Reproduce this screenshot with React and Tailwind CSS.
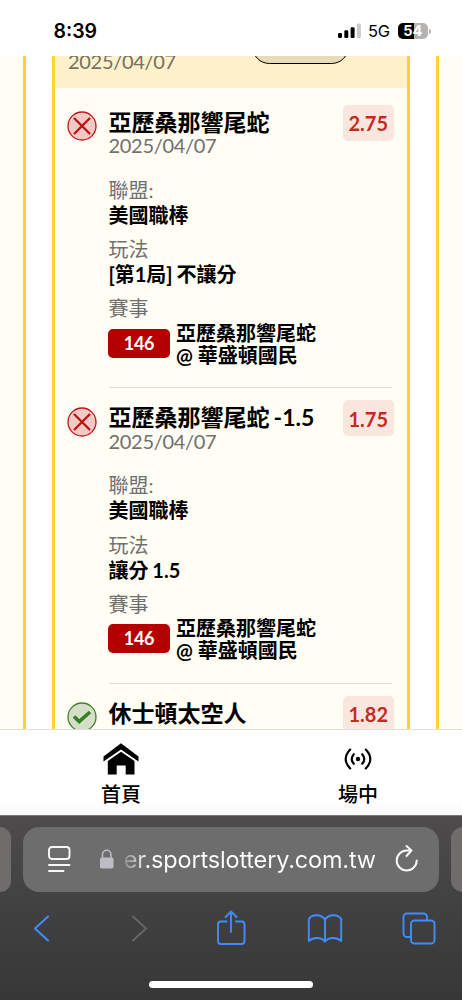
import React from 'react';

const CJK = "font-['Lato','Noto_Sans_CJK_TC',sans-serif]";

function StatusIcon({ won }) {
  return won ? (
    <svg className="block" width="30" height="30" viewBox="0 0 30 30" fill="none">
      <circle cx="15" cy="15" r="14" fill="#d5dfc8" stroke="#43802f" strokeWidth="1.3" />
      <path d="M7 14.500l5.200 5L23 10" stroke="#347f26" strokeWidth="3.600" />
    </svg>
  ) : (
    <svg className="block" width="30" height="30" viewBox="0 0 30 30" fill="none">
      <circle cx="15" cy="15" r="14" fill="#f2c9c4" stroke="#c4151a" strokeWidth="1.3" />
      <path d="M7 7l16 16M23 7L7 23" stroke="#bd0d0d" strokeWidth="2.200" />
    </svg>
  );
}

function Field({ label, value }) {
  return (
    <div className="mb-[9.3px] text-xl leading-[25px]">
      <div className="text-[#707070]">{label}</div>
      <div className="font-bold [word-spacing:-1px]">{value}</div>
    </div>
  );
}

function Bet({ title, odds, play, won }) {
  return (
    <div className="flex h-[295.5px] shrink-0 pl-3">
      <div className="w-[41.5px] shrink-0 pt-[18.5px]">
        <StatusIcon won={won} />
      </div>
      <div className="w-[283px] border-b border-[#dedcd6] pt-[15px]">
        <div className="flex h-[50px] justify-between">
          <div className="whitespace-nowrap">
            <div className="text-[23px] leading-[28px] font-bold [word-spacing:-1.500px]">{title}</div>
            {play && <div className="-mt-[1.5px] text-xl leading-[22px] tracking-[-0.3px] text-[#707070]">2025/04/07</div>}
          </div>
          <div className="-mt-[3px] -mr-[2.500px] flex h-9 w-[51.5px] items-center justify-center rounded-[5px] bg-[#f8e6df] pt-px text-[20px] font-bold text-[#c42b24]">
            {odds}
          </div>
        </div>
        {play && (
          <div className="pt-[20px]">
            <Field label="聯盟:" value="美國職棒" />
            <Field label="玩法" value={play} />
            <div className="text-xl leading-[25px] text-[#707070]">賽事</div>
            <div className="-ml-[0.500px] flex items-start gap-[6px]">
              <div className="mt-[7.500px] flex h-[29px] w-[62px] items-center justify-center rounded-[5px] bg-[#b50000] text-[18px] font-bold tracking-[-0.3px] text-white">
                146
              </div>
              <div className="pt-[0.500px] text-xl leading-[22px] font-bold">
                <div>亞歷桑那響尾蛇</div>
                <div>@ 華盛頓國民</div>
              </div>
            </div>
          </div>
        )}
      </div>
    </div>
  );
}

function StatusBar() {
  return (
    <header className="flex h-14 shrink-0 items-center bg-white pt-[6px] pr-[31.500px] pl-[53.500px] font-['Inter',sans-serif]">
      <span className="mt-[1px] text-[19.500px] font-semibold">8:39</span>
      <svg className="ml-auto" width="24" height="16" viewBox="0 0 24 16">
        <rect x="0" y="10" width="4" height="5" rx="1.2" />
        <rect x="6.3" y="7.2" width="4" height="7.8" rx="1.2" />
        <rect x="12.6" y="4.2" width="4" height="10.8" rx="1.2" />
        <rect x="18.9" y="0.5" width="4" height="14.5" rx="1.2" fill="#cbcbcb" />
      </svg>
      <span className="ml-[6.500px] w-[30px] text-[16.500px] tracking-[-0.200px]">5G</span>
      <div className="flex h-[16.500px] w-[29.5px] items-center justify-center rounded-[5px] bg-linear-to-r from-black from-[54%] to-[#b3b3b3] to-[54%] text-[14.500px] leading-none font-bold text-white">
        54
      </div>
      <div className="ml-px h-[5px] w-[2px] rounded-r-full bg-[#b3b3b3]" />
    </header>
  );
}

function TabBar() {
  return (
    <nav className="flex h-[86px] shrink-0 justify-between border-t border-[#dddddb] bg-linear-to-b from-white from-80% to-[#fafafa] pr-[71px] pl-[68px] text-xl leading-7 font-medium">
      <div className="flex w-[106px] flex-col items-center pt-[13px]">
        <svg width="36" height="33" viewBox="0 0 36 33">
          <path d="M.5 13.500V18.500L18 6.500l17.500 12v-5L18 .3z" />
          <path d="M18 8.700L31.500 18V31.500h-8.800v-9h-9v9H4.800V18z" />
        </svg>
        <span className="mt-[3.500px]">首頁</span>
      </div>
      <div className="flex w-[66px] flex-col items-center pt-[18px]">
        <svg width="28" height="22" viewBox="0 0 28 22" fill="none" stroke="black" strokeWidth="2.100" strokeLinecap="round">
          <circle cx="14" cy="11" r="2.200" fill="black" stroke="none" />
          <path d="M9.800 6.200Q5.600 11 9.800 15.800M18.200 6.200Q22.400 11 18.200 15.800M6.200 1.500Q-2.800 11 6.200 20.500M21.800 1.500Q30.800 11 21.800 20.500" />
        </svg>
        <span className="mt-[9.500px]">場中</span>
      </div>
    </nav>
  );
}

function Browser() {
  return (
    <footer className="h-[185px] shrink-0 border-t border-[#777] bg-linear-to-b from-[#4d4b4b] to-[#373737] pt-[11px] text-[#f7f7f7]">
      <div className="flex h-[65px] gap-3 overflow-hidden">
        <div className="w-[11.300px] shrink-0 rounded-r-[16px] bg-[#6f6c6c]" />
        <div className="flex w-[415.500px] shrink-0 items-center rounded-[16px] bg-[#6e6d6d] pl-[24.500px]">
          <svg width="23" height="28" viewBox="0 0 23 28" fill="none" stroke="currentColor" strokeWidth="1.900" strokeLinecap="round">
            <rect x="1" y="1" width="20.500" height="12" rx="3" />
            <path d="M1 19h20.500M1 25h14.500" />
          </svg>
          <svg className="mt-[-2px] ml-[29.500px]" width="14" height="20" viewBox="0 0 14 20">
            <rect y="8.500" width="13.500" height="11" rx="1.800" fill="#bebcc5" />
            <path d="M2.500 9V5.500a4.200 4.200 0 0 1 8.400 0V9" fill="none" stroke="#bebcc5" strokeWidth="1.500" />
          </svg>
          <span className="ml-[9.500px] w-[253px] bg-linear-to-r from-[#8b8989] to-white to-[9%] bg-clip-text font-['Inter',sans-serif] text-[23.500px] leading-8 tracking-[-0.180px] whitespace-nowrap text-transparent">
            er.sportslottery.com.tw
          </span>
          <svg className="-mt-[4px] ml-[18.500px] shrink-0" width="24" height="28" viewBox="0 0 24 28" fill="none" stroke="currentColor" strokeWidth="2" strokeLinecap="round" strokeLinejoin="round">
            <path d="M21.700 16.500A10 10 0 1 1 11.700 6.500H16M11.500 2L16.500 6.500L11.500 12" />
          </svg>
        </div>
        <div className="w-3 shrink-0 rounded-l-[16px] bg-[#6f6c6c]" />
      </div>
      <div className="flex h-[86px] items-start pt-[17.500px] pl-[33px]">
        <svg width="17" height="36" viewBox="0 0 17 36" fill="none" stroke="#408cff" strokeWidth="2" strokeLinecap="round" strokeLinejoin="round"><path d="M15 6.500L2 18.500l13 12" /></svg>
        <svg className="ml-[81px]" width="17" height="36" viewBox="0 0 17 36" fill="none" stroke="#666" strokeWidth="2" strokeLinecap="round" strokeLinejoin="round"><path d="M2 6.500L15 18.500L2 30.500" /></svg>
        <svg className="ml-[68px]" width="30" height="36" viewBox="0 0 30 36" fill="none" stroke="#408cff" strokeWidth="1.900" strokeLinecap="round" strokeLinejoin="round">
          <path d="M10.500 11.500H4.500A3 3 0 0 0 2 14.500V31a3 3 0 0 0 3 3h20.500a3 3 0 0 0 3-3V14.500a3 3 0 0 0-3-3H20M15 22V2M9.500 7L15 1.500L20.500 7" />
        </svg>
        <svg className="ml-[61px]" width="36" height="36" viewBox="0 0 36 36" fill="none" stroke="#408cff" strokeWidth="1.900" strokeLinejoin="round">
          <path d="M18 9.500C14 4 5.500 4 1.800 9V31C6.500 27 14 27 18 31.500C22 27 29.500 27 34.200 31V9C30.500 4 22 4 18 9.500V31" />
        </svg>
        <svg className="ml-[58.500px]" width="34" height="36" viewBox="0 0 34 36" fill="none" stroke="#408cff" strokeWidth="1.900">
          <rect x="9" y="10.500" width="23.500" height="23" rx="3.500" />
          <path d="M25 10V7a3.500 3.500 0 0 0-3.500-3.500H5A3.500 3.500 0 0 0 1.500 7v16.500A3.500 3.500 0 0 0 5 27h3.500" />
        </svg>
      </div>
      <div className="mx-auto mt-[3px] h-[7px] w-[164px] rounded-full bg-white" />
    </footer>
  );
}

export default function App() {
  return (
    <div className={`flex h-[1000px] w-[462px] flex-col overflow-hidden bg-white text-black ${CJK}`}>
      <StatusBar />
      <main className="flex min-h-0 flex-1 gap-[26px] overflow-hidden">
        <div className="w-[26px] shrink-0 border-r-[3px] border-[#ffd52d] bg-[#fffdf4]" />
        <section className="flex w-[358px] shrink-0 flex-col overflow-hidden border-x-[3px] border-[#ffd52d] bg-[#fffdf4]">
          <div className="flex h-[31.500px] shrink-0 items-start justify-between overflow-hidden bg-[#fff1cc] pr-[58.500px] pl-[13px]">
            <div className="-mt-[6px] text-xl leading-[22px] tracking-[-0.3px] text-[#75705f]">2025/04/07</div>
            <div className="-mt-[27px] h-[35px] w-[97px] rounded-[18px] border-[1.500px] border-black bg-[#e6dcb9]" />
          </div>
          <div className="flex flex-col pt-[5.300px]">
            <Bet title="亞歷桑那響尾蛇" odds="2.75" play="[第1局] 不讓分" />
            <Bet title="亞歷桑那響尾蛇 -1.5" odds="1.75" play="讓分 1.5" />
            <Bet title="休士頓太空人" odds="1.82" won />
          </div>
        </section>
        <div className="w-[26px] shrink-0 border-l-[3px] border-[#ffd52d] bg-[#fffdf4]" />
      </main>
      <TabBar />
      <Browser />
    </div>
  );
}
